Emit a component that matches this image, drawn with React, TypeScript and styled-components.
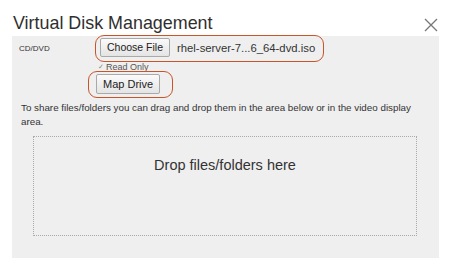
import React from 'react'
import styled, { createGlobalStyle } from 'styled-components'

const Global = createGlobalStyle`
  html, body { margin: 0; padding: 0; background: #fff; }
  body { font-family: "Liberation Sans", Arial, sans-serif; }
`

const App: React.FC = () => {
  return (
    <>
      <Global />
      <Dialog>
        <Header>
          <Title>Virtual Disk Management</Title>
          <Close aria-label="close">
            <svg width="14" height="14" viewBox="0 0 14 14">
              <path d="M1 1 L13 13 M13 1 L1 13" stroke="#777" strokeWidth="1.3" />
            </svg>
          </Close>
        </Header>
        <Panel>
          <Row>
            <Label>CD/DVD</Label>
            <Controls>
              <Highlight>
                <Button>Choose File</Button>
                <FileName>rhel-server-7...6_64-dvd.iso</FileName>
              </Highlight>
              <Check>
                <Tick>✓</Tick>
                Read Only
              </Check>
              <Highlight $tight>
                <Button $tall>Map Drive</Button>
              </Highlight>
            </Controls>
          </Row>
          <Hint>
            To share files/folders you can drag and drop them in the area below or in the video display area.
          </Hint>
          <DropZone>Drop files/folders here</DropZone>
        </Panel>
      </Dialog>
    </>
  )
}

export default App

const Dialog = styled.div`
  width: 451px;
  height: 270px;
  padding: 10px 12px 12px;
  box-sizing: border-box;
  display: flex;
  flex-direction: column;
`

const Header = styled.div`
  display: flex;
  align-items: center;
  justify-content: space-between;
  height: 26px;
`

const Title = styled.div`
  font-size: 17.9px;
  color: #2f2f2f;
  padding-left: 1px;
`

const Close = styled.div`
  display: flex;
  margin-right: 1px;
  margin-top: 4px;
`

const Panel = styled.div`
  flex: 1;
  background: #efefef;
  display: flex;
  flex-direction: column;
  padding: 0 9px 0 7px;
`

const Row = styled.div`
  display: flex;
`

const Label = styled.div`
  width: 76px;
  font-size: 8px;
  color: #333;
  padding-top: 8px;
`

const Controls = styled.div`
  display: flex;
  flex-direction: column;
  align-items: flex-start;
`

const Highlight = styled.div<{ $tight?: boolean }>`
  display: flex;
  align-items: center;
  gap: 7px;
  border: 1.5px solid #c8542a;
  border-radius: 9px;
  padding: ${(p) => (p.$tight ? '2px 12px 3px 7px' : '2px 8px 4px 4px')};
  margin-left: ${(p) => (p.$tight ? '-7px' : '0')};
  margin-top: -1px;
`

const Button = styled.div<{ $tall?: boolean }>`
  font-size: ${(p) => (p.$tall ? '11px' : '10.5px')};
  color: #222;
  background: linear-gradient(#fafafa, #e4e4e4);
  border: 1px solid #a9a9a9;
  border-radius: 2px;
  padding: ${(p) => (p.$tall ? '3px 6px 3px' : '2px 6px 3px')};
  line-height: 12px;
`

const FileName = styled.div`
  font-size: 11.3px;
  color: #333;
`

const Check = styled.div`
  display: flex;
  align-items: center;
  gap: 2px;
  font-size: 9px;
  color: #555;
  margin: 0 0 0 3px;
  line-height: 10px;
`

const Tick = styled.span`
  font-size: 7px;
  color: #888;
`

const Hint = styled.div`
  font-size: 9.8px;
  color: #333;
  line-height: 14px;
  margin-top: 3px;
  padding-left: 2px;
`

const DropZone = styled.div`
  height: 100px;
  margin: 7px 13px 0 14px;
  border: 1px dotted #aaa;
  display: flex;
  justify-content: center;
  padding-top: 20px;
  box-sizing: border-box;
  font-size: 14.5px;
  color: #333;
`
